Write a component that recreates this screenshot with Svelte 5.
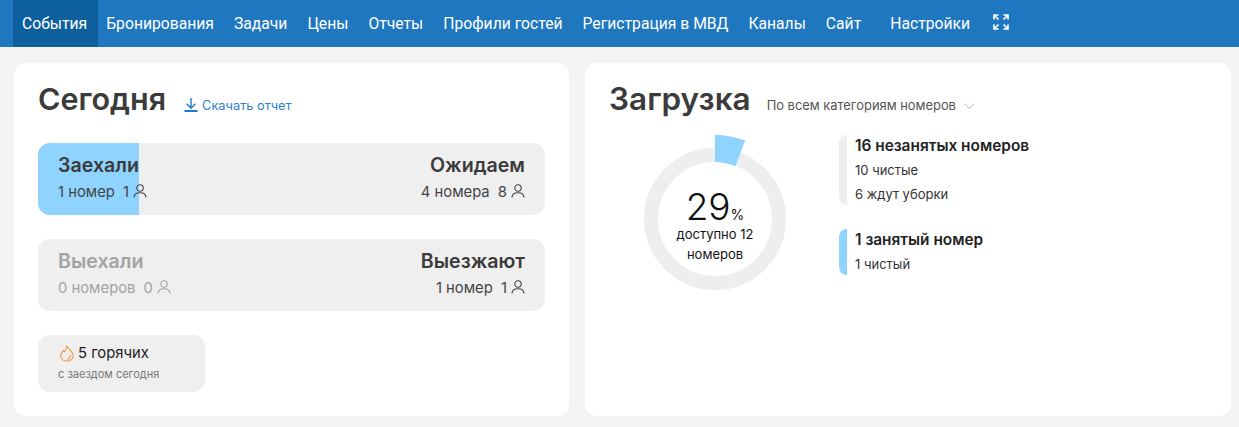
<script>
	const navItems = ['Бронирования', 'Задачи', 'Цены', 'Отчеты', 'Профили гостей', 'Регистрация в МВД', 'Каналы', 'Сайт'];
</script>

{#snippet person()}
	<svg class="person" width="14" height="14" viewBox="0 0 14 14" fill="none" stroke="currentColor" stroke-width="1.1">
		<circle cx="7" cy="4" r="3.2" />
		<path d="M1 13.500c0-3 2.400-4.800 6-4.800s6 1.800 6 4.800" />
	</svg>
{/snippet}

<div class="page">
	<nav class="nav">
		<a class="item active" href="#top">События</a>
		{#each navItems as item}
			<a class="item" href="#top">{item}</a>
		{/each}
		<a class="item settings" href="#top">Настройки</a>
		<svg class="expand" width="16" height="16" viewBox="0 0 16 16" fill="none" stroke="#fff" stroke-width="1.700">
			<path d="M1 5.500V1h4.500M1 1l4.500 4.500M10.500 1H15v4.500M15 1l-4.500 4.500M1 10.500V15h4.500M1 15l4.500-4.500M10.500 15H15v-4.500M15 15l-4.500-4.500" />
		</svg>
	</nav>

	<main class="content">
		<section class="card today">
			<header class="head">
				<h1>Сегодня</h1>
				<a class="download" href="#top">
					<svg width="14" height="14" viewBox="0 0 14 14" fill="none" stroke="#1f78d1" stroke-width="1.4">
						<path d="M7 0V10M2.600 5.800L7 10.200 11.400 5.800" />
						<path d="M.5 13h13" stroke-width="2" />
					</svg>
					Скачать отчет
				</a>
			</header>

			<div class="row">
				<div class="fill"></div>
				<div class="side">
					<div class="name">Заехали</div>
					<div class="sub">1 номер <span class="guests">1{@render person()}</span></div>
				</div>
				<div class="side right">
					<div class="name">Ожидаем</div>
					<div class="sub">4 номера <span class="guests">8{@render person()}</span></div>
				</div>
			</div>

			<div class="row">
				<div class="side muted">
					<div class="name">Выехали</div>
					<div class="sub">0 номеров <span class="guests">0{@render person()}</span></div>
				</div>
				<div class="side right">
					<div class="name">Выезжают</div>
					<div class="sub">1 номер <span class="guests">1{@render person()}</span></div>
				</div>
			</div>

			<div class="hot">
				<div class="hot-title">
					<svg class="flame" width="14" height="17" viewBox="0 0 14 17" fill="none" stroke="#f0983a" stroke-width="1.100" stroke-linejoin="round" stroke-linecap="round">
						<path d="M6.500 1C7.200 3.800 5.400 5.200 4.500 7 3.900 6.500 3.600 6 3.500 5.400 1.800 7 .8 8.800.8 10.700.8 14 3.500 16 7 16s6.200-2 6.200-5.300C13.200 7 9.200 4.400 6.500 1Z" />
						<path d="M10.200 10.200c0 2.200-1 3.500-2.700 4" />
					</svg>
					5 горячих
				</div>
				<div class="hot-sub">с заездом сегодня</div>
			</div>
		</section>

		<section class="card load">
			<header class="head">
				<h1>Загрузка</h1>
				<button class="filter">
					По всем категориям номеров
					<svg width="11" height="6" viewBox="0 0 11 6" fill="none" stroke="#bbb" stroke-width="1"><path d="M0.500 0.500l5 5 5-5" /></svg>
				</button>
			</header>

			<div class="load-body">
				<div class="donut">
					<svg width="170" height="170" viewBox="0 0 170 170">
						<circle cx="85" cy="84" r="64" fill="none" stroke="#eeeeee" stroke-width="14" />
						<path d="M85 0A84 84 0 0 1 115.100 5.600L105.400 31.200A57 57 0 0 0 85 27z" fill="#8fd3ff" />
					</svg>
					<div class="donut-text">
						<div class="pct"><span class="num">29</span><span class="sign">%</span></div>
						<div class="avail">доступно 12 номеров</div>
					</div>
				</div>

				<div class="stats">
					<div class="stat">
						<div class="stat-title">16 незанятых номеров</div>
						<div class="stat-line">10 чистые</div>
						<div class="stat-line">6 ждут уборки</div>
					</div>
					<div class="stat busy">
						<div class="stat-title">1 занятый номер</div>
						<div class="stat-line">1 чистый</div>
					</div>
				</div>
			</div>
		</section>
	</main>
</div>

<style>
	:global(body) {
		margin: 0;
		background: #f4f4f4;
	}
	.page {
		height: 427px;
		overflow: hidden;
		font-family: Inter, 'Noto Sans', sans-serif;
		color: #333;
	}
	.nav {
		display: flex;
		align-items: center;
		height: 47px;
		padding-left: 13px;
		background: #1f78bf;
		font-family: Roboto, 'Liberation Sans', sans-serif;
		font-size: 15.700px;
	}
	.item {
		display: flex;
		align-items: center;
		height: 100%;
		padding: 0 10px 1px;
		box-sizing: border-box;
		color: #fff;
		text-decoration: none;
	}
	.active {
		padding: 0 11px 1px 9px;
		margin-right: -2px;
		background: #0e5f9e;
	}
	.settings {
		margin-left: 9px;
	}
	.expand {
		margin-left: 13px;
		margin-top: -3px;
	}
	.content {
		display: grid;
		grid-template-columns: 555px 646px;
		gap: 16px;
		padding: 16px 8px 0 14px;
	}
	.card {
		height: 353px;
		box-sizing: border-box;
		padding: 16px 24px;
		background: #fff;
		border-radius: 12px;
	}
	.head {
		display: flex;
		align-items: baseline;
		height: 40px;
		margin-bottom: 24px;
	}
	h1 {
		margin: 0;
		font-size: 30.500px;
		font-weight: 600;
		line-height: 40px;
		color: #3b3b3b;
	}
	.load h1 {
		font-size: 31.500px;
	}
	.download {
		position: relative;
		top: 2px;
		display: flex;
		align-items: center;
		gap: 4px;
		margin-left: 18px;
		font-size: 12.800px;
		color: #2f7fd6;
		text-decoration: none;
	}
	.row {
		position: relative;
		display: flex;
		justify-content: space-between;
		height: 72px;
		box-sizing: border-box;
		margin-bottom: 24px;
		padding: 10px 20px;
		overflow: hidden;
		background: #efefef;
		border-radius: 12px;
	}
	.fill {
		position: absolute;
		left: 0;
		top: 0;
		bottom: 0;
		width: 20%;
		background: #8fd3ff;
	}
	.side {
		position: relative;
	}
	.right {
		text-align: right;
	}
	.name {
		font-size: 19.600px;
		font-weight: 600;
		line-height: 24px;
		color: #3b3b3b;
	}
	.sub {
		margin-top: 6px;
		font-size: 14.800px;
		line-height: 18px;
		color: #444;
	}
	.guests {
		margin-left: 4px;
	}
	.person {
		margin-left: 4px;
		vertical-align: -1px;
	}
	.muted .name,
	.muted .sub {
		color: #a3a3a3;
	}
	.hot {
		width: 167px;
		height: 57px;
		box-sizing: border-box;
		padding: 10px 20px;
		background: #efefef;
		border-radius: 12px;
	}
	.hot-title {
		display: flex;
		align-items: center;
		gap: 5px;
		font-size: 14.800px;
		line-height: 17px;
		color: #222;
	}
	.flame {
		margin-left: 2px;
		margin-right: -1px;
	}
	.hot-sub {
		margin-top: 5px;
		font-size: 11px;
		line-height: 14px;
		color: #777;
	}
	.filter {
		display: flex;
		align-items: center;
		gap: 8px;
		margin-left: 16px;
		padding: 0;
		border: 0;
		background: none;
		font: inherit;
		font-size: 12.900px;
		color: #555;
	}
	.load-body {
		display: flex;
		align-items: flex-start;
	}
	.donut {
		position: relative;
		width: 170px;
		height: 170px;
		margin: -8px 0 0 21px;
		flex: none;
	}
	.donut-text {
		position: absolute;
		left: 25px;
		right: 25px;
		top: 50px;
		text-align: center;
		color: #111;
	}
	.pct {
		line-height: 44px;
	}
	.num {
		font-size: 37px;
		font-weight: 300;
	}
	.sign {
		font-size: 14px;
	}
	.avail {
		font-size: 13px;
		line-height: 20px;
		margin-top: -13px;
	}
	.stats {
		display: flex;
		flex-direction: column;
		gap: 24px;
		margin-left: 39px;
		margin-top: -8px;
	}
	.stat {
		padding-left: 8px;
		border-left: 8px solid #eeeeee;
		border-radius: 8px 0 0 8px;
	}
	.busy {
		border-left-color: #8fd3ff;
	}
	.stat-title {
		font-size: 15.400px;
		font-weight: 600;
		line-height: 22px;
		color: #222;
	}
	.stat-line {
		position: relative;
		top: 1px;
		font-size: 13px;
		line-height: 24px;
		color: #333;
	}
</style>
